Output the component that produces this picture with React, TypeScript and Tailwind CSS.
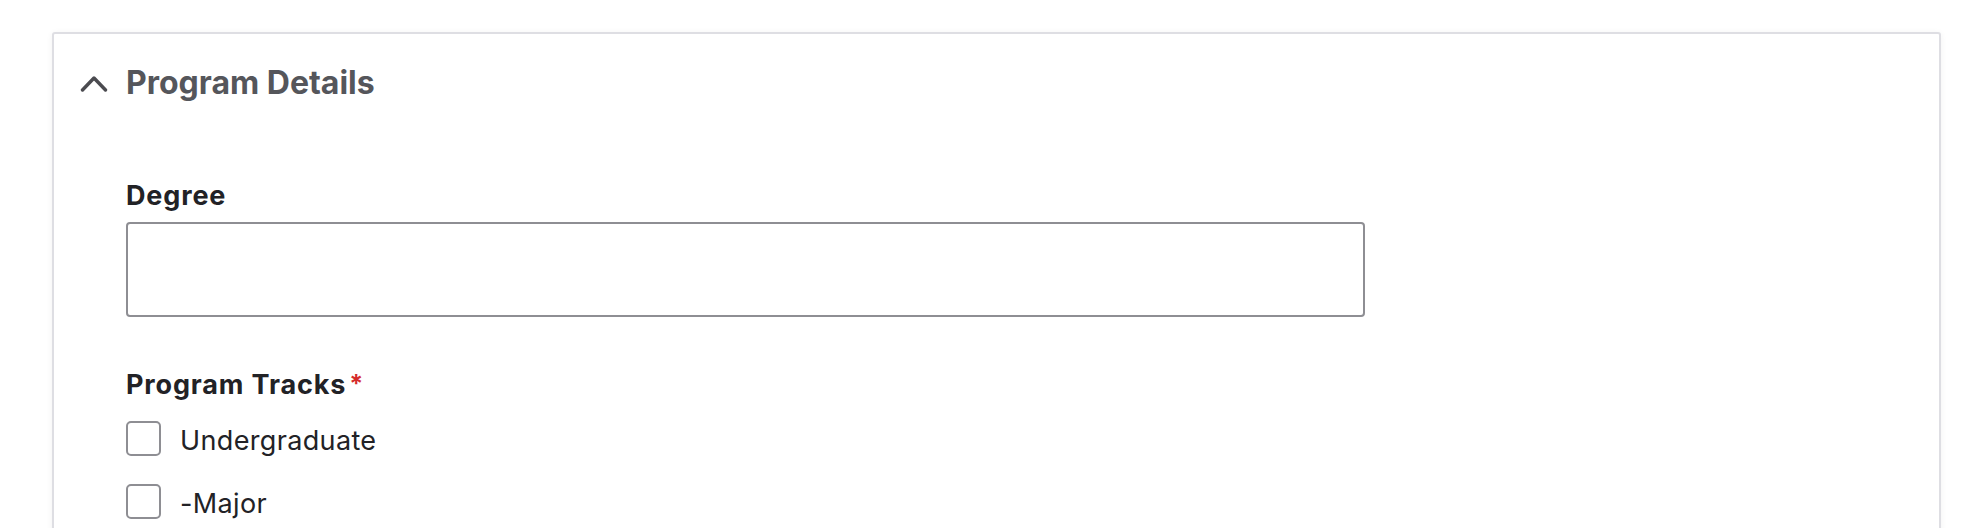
import React from 'react';

const tracks = ['Undergraduate', '-Major'];

function ChevronUp() {
  return (
    <svg width="28" height="17" viewBox="0 0 28 17" fill="none" className="shrink-0">
      <polyline
        points="2.5,15 14,3 25.5,15"
        stroke="#4b4b50"
        strokeWidth="3.4"
        strokeLinecap="round"
        strokeLinejoin="round"
      />
    </svg>
  );
}

export default function App() {
  return (
    <div className="min-h-screen bg-white pt-[32px] font-['Inter','Noto_Sans',sans-serif]">
      <div className="ml-[52px] w-[1889px] h-[520px] rounded-[3px] border-2 border-[#dedee3] bg-white shadow-[0_1px_6px_rgba(0,0,0,0.06)]">
        <div className="flex items-center gap-[18px] pl-[26px] pt-[29px]">
          <ChevronUp />
          <h2 className="text-[32px] leading-[40px] font-bold text-[#55565b]">Program Details</h2>
        </div>

        <div className="pl-[72px] pt-[76px]">
          <label className="block text-[27px] leading-[33px] font-bold tracking-[0.85px] text-[#222226]">Degree</label>
          <div className="mt-[10px] w-[1239px] h-[95px] rounded-[4px] border-2 border-[#8e8e93] bg-white" />

          <div className="mt-[51px] flex items-start text-[27px] leading-[33px] font-bold tracking-[0.85px] text-[#222226]">
            <span>Program Tracks</span>
            <span className="ml-[3px] text-[#d52b2b] text-[25px] leading-[25px] mt-[4px]">*</span>
          </div>

          <div className="mt-[20px] flex flex-col gap-[27px]">
            {tracks.map((t) => (
              <div key={t} className="flex items-start gap-[19px]">
                <div className="w-[35px] h-[35px] shrink-0 rounded-[5px] border-2 border-[#8e8e93] bg-white" />
                <span className="mt-[3px] text-[27px] leading-[33px] tracking-[0.35px] text-[#222226]">{t}</span>
              </div>
            ))}
          </div>
        </div>
      </div>
    </div>
  );
}
